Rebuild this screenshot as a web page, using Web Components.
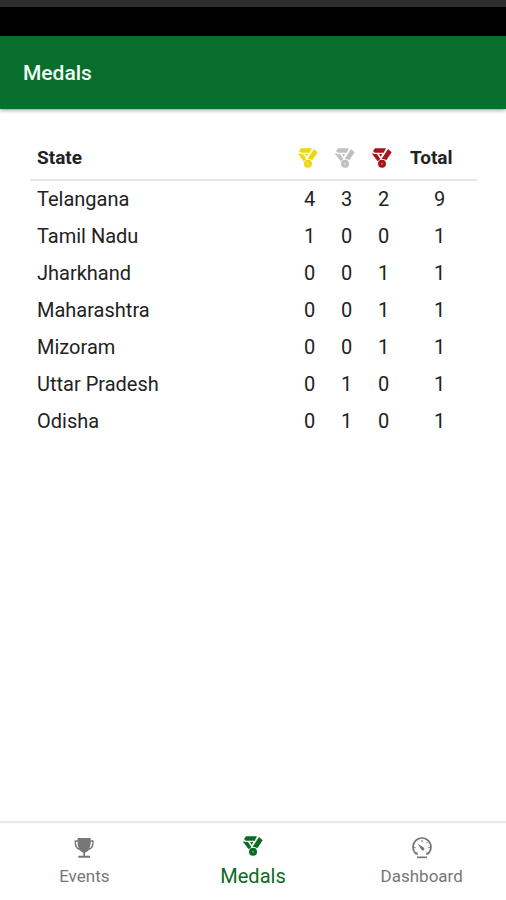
<!DOCTYPE html>
<html lang="en">
<head>
<meta charset="utf-8">
<meta name="viewport" content="width=device-width, initial-scale=1">
<title>Medals</title>
<style>
  body {
    margin: 0;
    background-color: white;
    font-family: Roboto, sans-serif;
    color: #222222;
  }
</style>
</head>
<body>
<medals-app></medals-app>

<script>
const medalTemplate = document.createElement('template');

medalTemplate.innerHTML = `
  <style>
  :host {
    display: inline-block;
    width: 20px;
    height: 20px;
  }

  svg {
    display: block;
    width: 100%;
    height: 100%;
    fill: currentColor;
  }
  </style>
  <svg viewBox="0 0 60 60" aria-hidden="true">
    <path d="M9 1H42L35 14H8L3 9Z" />
    <path d="M2 14L6 18H15L25 33L17 40L1 19Z" />
    <path d="M48 3L59 13L43 37Q38 33 29 32Z" />
    <path d="M21 18H31L26 26Z" />
    <circle cx="30" cy="47" r="12" />
    <circle cx="30" cy="47" r="3" fill="white" fill-opacity="0.4" />
  </svg>
`;

class MedalIcon extends HTMLElement {
  constructor() {
    super();
    const _shadowRoot = this.attachShadow({ mode: 'open' });
    _shadowRoot.appendChild(medalTemplate.content.cloneNode(true));
  }
}

const headerTemplate = document.createElement('template');

headerTemplate.innerHTML = `
  <style>
  :host {
    display: block;
    position: relative;
    box-shadow: 0 1px 4px rgba(0, 0, 0, 0.45);
  }

  .status {
    height: 29px;
    background-color: black;
    border-top: 7px solid #2d2d2d;
  }

  header {
    display: flex;
    align-items: center;
    height: 73px;
    padding: 0 23px;
    background-color: #076e2d;
  }

  h1 {
    margin: 0;
    color: #f2fff5;
    font-size: 21px;
    font-weight: 500;
    line-height: 24px;
  }
  </style>
  <div class="status"></div>
  <header>
    <h1><slot></slot></h1>
  </header>
`;

class AppHeader extends HTMLElement {
  constructor() {
    super();
    const _shadowRoot = this.attachShadow({ mode: 'open' });
    _shadowRoot.appendChild(headerTemplate.content.cloneNode(true));
  }
}

// state, gold, silver, bronze
const standings = [
  ['Telangana', 4, 3, 2],
  ['Tamil Nadu', 1, 0, 0],
  ['Jharkhand', 0, 0, 1],
  ['Maharashtra', 0, 0, 1],
  ['Mizoram', 0, 0, 1],
  ['Uttar Pradesh', 0, 1, 0],
  ['Odisha', 0, 1, 0],
];

const tableTemplate = document.createElement('template');

tableTemplate.innerHTML = `
  <style>
  :host {
    display: block;
  }

  table {
    width: 100%;
    border-collapse: collapse;
    table-layout: fixed;
    font-size: 20px;
    line-height: 24px;
  }

  th,
  td {
    box-sizing: border-box;
    height: 37px;
    padding: 0;
    text-align: center;
    vertical-align: middle;
  }

  th {
    height: 44px;
    font-size: 19px;
    font-weight: 700;
    border-bottom: 2px solid #e6e6e6;
  }

  th:first-child,
  td:first-child {
    padding-left: 7px;
    text-align: left;
  }

  th:last-child {
    width: 75px;
    padding-left: 8px;
    text-align: left;
  }

  .medal {
    width: 37px;
  }

  medal-icon {
    display: block;
    margin: 0 7px;
  }

  .gold {
    color: #f2d50f;
  }

  .silver {
    color: #c0c0c0;
  }

  .bronze {
    color: #a3161b;
  }
  </style>
  <table>
    <thead>
      <tr>
        <th scope="col">State</th>
        <th scope="col" class="medal" aria-label="Gold"><medal-icon class="gold"></medal-icon></th>
        <th scope="col" class="medal" aria-label="Silver"><medal-icon class="silver"></medal-icon></th>
        <th scope="col" class="medal" aria-label="Bronze"><medal-icon class="bronze"></medal-icon></th>
        <th scope="col">Total</th>
      </tr>
    </thead>
    <tbody></tbody>
  </table>
`;

class MedalTable extends HTMLElement {
  constructor() {
    super();
    const _shadowRoot = this.attachShadow({ mode: 'open' });
    _shadowRoot.appendChild(tableTemplate.content.cloneNode(true));
    const _body = _shadowRoot.querySelector('tbody');

    standings.forEach(([state, gold, silver, bronze]) => {
      const row = _body.insertRow();
      [state, gold, silver, bronze, gold + silver + bronze].forEach((value) => {
        row.insertCell().textContent = value;
      });
    });
  }
}

const tabTemplate = document.createElement('template');

tabTemplate.innerHTML = `
  <style>
  :host {
    display: block;
    flex: 1 1 0;
    color: #777777;
    font-size: 17px;
  }

  :host([active]) {
    color: #0b6b1f;
    font-size: 20px;
  }

  a {
    display: flex;
    flex-direction: column;
    align-items: center;
    gap: 5px;
    padding: 14px 0 12px;
    color: inherit;
    text-decoration: none;
    line-height: 24px;
  }

  :host([active]) a {
    gap: 8px;
    padding: 13px 0 12px;
  }
  </style>
  <a>
    <slot name="icon"></slot>
    <span><slot></slot></span>
  </a>
`;

class TabItem extends HTMLElement {
  constructor() {
    super();
    const _shadowRoot = this.attachShadow({ mode: 'open' });
    _shadowRoot.appendChild(tabTemplate.content.cloneNode(true));
  }

  connectedCallback() {
    const link = this.shadowRoot.querySelector('a');
    link.href = this.getAttribute('href');
    if (this.hasAttribute('active')) {
      link.setAttribute('aria-current', 'page');
    }
  }
}

const appTemplate = document.createElement('template');

appTemplate.innerHTML = `
  <style>
  :host {
    display: flex;
    flex-direction: column;
    min-height: 100vh;
  }

  main {
    flex: 1;
    padding: 27px 29px 27px 30px;
  }

  nav {
    display: flex;
    border-top: 2px solid #e8e8e8;
  }

  svg {
    display: block;
    width: 22px;
    height: 22px;
  }
  </style>
  <app-header>Medals</app-header>
  <main>
    <medal-table></medal-table>
  </main>
  <nav>
    <tab-item href="#events">
      <svg slot="icon" viewBox="0 0 66 66" fill="currentColor" aria-hidden="true">
        <path d="M14 3H53V10H62V17C62 29 56 37 47 39C44 43 40 46 36 47V56H51V62H16V56H31V47C27 46 23 43 20 39C11 37 5 29 5 17V10H14ZM14 14H9C9 24 12 31 18 34C15 28 14 22 14 14ZM53 14C53 22 52 28 49 34C55 31 58 24 58 14Z" />
      </svg>
      Events
    </tab-item>
    <tab-item href="#medals" active>
      <medal-icon slot="icon"></medal-icon>
      Medals
    </tab-item>
    <tab-item href="#dashboard">
      <svg slot="icon" viewBox="0 0 66 66" fill="none" stroke="currentColor" stroke-width="5" aria-hidden="true">
        <path d="M21 51H16A27 27 0 1 1 50 51H45" />
        <path d="M18 61H48" />
        <path d="M33 9V15M8 32H14M58 32H52M16 48L20 44M50 48L46 44M50 15L46 19" stroke-width="3" />
        <path d="M20 20L37 31A5 5 0 1 1 30 36Z" fill="currentColor" stroke="none" />
      </svg>
      Dashboard
    </tab-item>
  </nav>
`;

class MedalsApp extends HTMLElement {
  constructor() {
    super();
    const _shadowRoot = this.attachShadow({ mode: 'open' });
    _shadowRoot.appendChild(appTemplate.content.cloneNode(true));
  }
}

window.customElements.define('medal-icon', MedalIcon);
window.customElements.define('app-header', AppHeader);
window.customElements.define('medal-table', MedalTable);
window.customElements.define('tab-item', TabItem);
window.customElements.define('medals-app', MedalsApp);
</script>
</body>
</html>
